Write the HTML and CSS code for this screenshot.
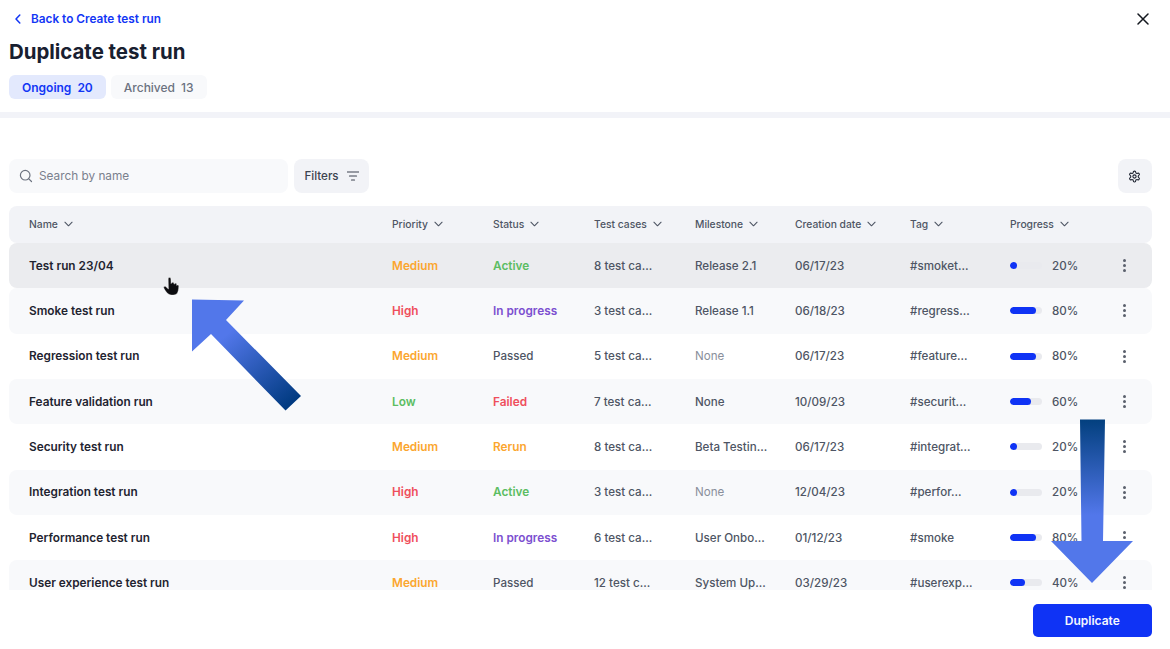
FILE: index.html
```html
<!DOCTYPE html>
<html lang="en">
<head>
<meta charset="utf-8">
<title>Duplicate test run</title>
<link rel="stylesheet" href="styles.css">
</head>
<body>
<div class="page">
  <header class="top">
    <div class="backbar">
      <a class="back"><svg class="ic-back" viewBox="0 0 10 12" width="10" height="12"><path d="M6.800 2 3 6l3.800 4" fill="none" stroke="#1236f5" stroke-width="1.500" stroke-linecap="round" stroke-linejoin="round"/></svg>Back to Create test run</a>
      <svg class="ic-close" viewBox="0 0 12 12" width="12" height="12"><path d="M1 1l10 10M11 1 1 11" stroke="#14181f" stroke-width="1.500" stroke-linecap="round"/></svg>
    </div>
    <h1>Duplicate test run</h1>
    <div class="tabs">
      <div class="tab tab-on"><span>Ongoing</span><span>20</span></div>
      <div class="tab"><span>Archived</span><span>13</span></div>
    </div>
  </header>
  <div class="divider"></div>
  <section class="toolbar">
    <div class="search">
      <svg viewBox="0 0 14 14" width="14" height="14"><circle cx="6.200" cy="6.200" r="4.800" fill="none" stroke="#6d7380" stroke-width="1.200"/><path d="m9.800 9.800 2.700 2.700" stroke="#6d7380" stroke-width="1.200" stroke-linecap="round"/></svg>
      <span>Search by name</span>
    </div>
    <div class="filters">Filters
      <svg viewBox="0 0 12 10" width="12" height="10"><path d="M.5 1h11M2.500 5h7M4.500 9h3" stroke="#3d4350" stroke-width="1.200" stroke-linecap="round"/></svg>
    </div>
    <div class="gear">
      <svg viewBox="0 0 24 24" width="13" height="13" fill="none" stroke="#1d2230" stroke-width="2" stroke-linecap="round" stroke-linejoin="round"><path d="M12.220 2h-.44a2 2 0 0 0-2 2v.18a2 2 0 0 1-1 1.730l-.43.25a2 2 0 0 1-2 0l-.15-.08a2 2 0 0 0-2.730.73l-.22.38a2 2 0 0 0 .73 2.730l.15.1a2 2 0 0 1 1 1.720v.51a2 2 0 0 1-1 1.740l-.15.09a2 2 0 0 0-.73 2.730l.22.38a2 2 0 0 0 2.730.73l.15-.08a2 2 0 0 1 2 0l.43.25a2 2 0 0 1 1 1.730V20a2 2 0 0 0 2 2h.44a2 2 0 0 0 2-2v-.18a2 2 0 0 1 1-1.730l.43-.25a2 2 0 0 1 2 0l.15.08a2 2 0 0 0 2.730-.73l.22-.39a2 2 0 0 0-.73-2.730l-.15-.08a2 2 0 0 1-1-1.740v-.5a2 2 0 0 1 1-1.740l.15-.09a2 2 0 0 0 .73-2.730l-.22-.38a2 2 0 0 0-2.730-.73l-.15.08a2 2 0 0 1-2 0l-.43-.25a2 2 0 0 1-1-1.730V4a2 2 0 0 0-2-2z"/><circle cx="12" cy="12" r="3"/></svg>
    </div>
  </section>
  <section class="table">
    <div class="row head">
      <div class="th">Name<svg viewBox="0 0 10 6"><path d="m1 1 4 4 4-4"/></svg></div>
      <div class="th">Priority<svg viewBox="0 0 10 6"><path d="m1 1 4 4 4-4"/></svg></div>
      <div class="th">Status<svg viewBox="0 0 10 6"><path d="m1 1 4 4 4-4"/></svg></div>
      <div class="th">Test cases<svg viewBox="0 0 10 6"><path d="m1 1 4 4 4-4"/></svg></div>
      <div class="th">Milestone<svg viewBox="0 0 10 6"><path d="m1 1 4 4 4-4"/></svg></div>
      <div class="th">Creation date<svg viewBox="0 0 10 6"><path d="m1 1 4 4 4-4"/></svg></div>
      <div class="th">Tag<svg viewBox="0 0 10 6"><path d="m1 1 4 4 4-4"/></svg></div>
      <div class="th">Progress<svg viewBox="0 0 10 6"><path d="m1 1 4 4 4-4"/></svg></div>
    </div>
    <div class="rows">
      <div class="row hover">
        <div class="name">Test run 23/04</div><div class="med">Medium</div><div class="green">Active</div><div>8 test ca...</div><div>Release 2.1</div><div>06/17/23</div><div>#smoket...</div>
        <div class="prog"><span class="track"><i style="width:7px"></i></span><span>20%</span></div><div class="kebab"><b></b><b></b><b></b></div>
      </div>
      <div class="row alt">
        <div class="name">Smoke test run</div><div class="red">High</div><div class="purple">In progress</div><div>3 test ca...</div><div>Release 1.1</div><div>06/18/23</div><div>#regress...</div>
        <div class="prog"><span class="track"><i style="width:26px"></i></span><span>80%</span></div><div class="kebab"><b></b><b></b><b></b></div>
      </div>
      <div class="row">
        <div class="name">Regression test run</div><div class="med">Medium</div><div>Passed</div><div>5 test ca...</div><div class="none">None</div><div>06/17/23</div><div>#feature...</div>
        <div class="prog"><span class="track"><i style="width:26px"></i></span><span>80%</span></div><div class="kebab"><b></b><b></b><b></b></div>
      </div>
      <div class="row alt">
        <div class="name">Feature validation run</div><div class="green">Low</div><div class="red">Failed</div><div>7 test ca...</div><div>None</div><div>10/09/23</div><div>#securit...</div>
        <div class="prog"><span class="track"><i style="width:21px"></i></span><span>60%</span></div><div class="kebab"><b></b><b></b><b></b></div>
      </div>
      <div class="row">
        <div class="name">Security test run</div><div class="med">Medium</div><div class="med">Rerun</div><div>8 test ca...</div><div>Beta Testin...</div><div>06/17/23</div><div>#integrat...</div>
        <div class="prog"><span class="track"><i style="width:7px"></i></span><span>20%</span></div><div class="kebab"><b></b><b></b><b></b></div>
      </div>
      <div class="row alt">
        <div class="name">Integration test run</div><div class="red">High</div><div class="green">Active</div><div>3 test ca...</div><div class="none">None</div><div>12/04/23</div><div>#perfor...</div>
        <div class="prog"><span class="track"><i style="width:7px"></i></span><span>20%</span></div><div class="kebab"><b></b><b></b><b></b></div>
      </div>
      <div class="row">
        <div class="name">Performance test run</div><div class="red">High</div><div class="purple">In progress</div><div>6 test ca...</div><div>User Onbo...</div><div>01/12/23</div><div>#smoke</div>
        <div class="prog"><span class="track"><i style="width:26px"></i></span><span>80%</span></div><div class="kebab"><b></b><b></b><b></b></div>
      </div>
      <div class="row alt">
        <div class="name">User experience test run</div><div class="med">Medium</div><div>Passed</div><div>12 test c...</div><div>System Up...</div><div>03/29/23</div><div>#userexp...</div>
        <div class="prog"><span class="track"><i style="width:15px"></i></span><span>40%</span></div><div class="kebab"><b></b><b></b><b></b></div>
      </div>
    </div>
  </section>
  <footer class="foot"><button class="primary">Duplicate</button></footer>

  <svg class="overlay" viewBox="0 0 1170 649" width="1170" height="649">
    <defs>
      <linearGradient id="g1" gradientUnits="userSpaceOnUse" x1="232" y1="330" x2="293" y2="403"><stop offset="0" stop-color="#5277ea"/><stop offset="1" stop-color="#003a80"/></linearGradient>
      <linearGradient id="g2" gradientUnits="userSpaceOnUse" x1="1092" y1="420" x2="1092" y2="515"><stop offset="0" stop-color="#03407f"/><stop offset="1" stop-color="#5277ea"/></linearGradient>
    </defs>
    <path d="M192 299.500 244 300.500 226 320 301 396 285.500 410.500 211 334 192 351.500Z" fill="url(#g1)"/>
    <path d="M1080 419.500H1105L1103 541H1133L1092 583 1051 541H1081.500Z" fill="url(#g2)"/>
    <path d="M168.200 278.800c0-1.800 2.600-1.800 2.700 0l.2 4.800.5-.6c.5-1.200 2.200-1 2.300.3l.1.9.5-.4c.7-.9 2.200-.5 2.200.7l0 1c.6-.8 2.200-.4 2.100.9-.2 3-.6 5.600-1.700 7-2 2.200-6.800 2.300-9.300.2-1.700-1.500-3.300-4-4-5.500-.6-1.400 1-2.500 2.100-1.400l2.500 2.300z" fill="#0d0d10" stroke="#fff" stroke-width=".4"/>
  </svg>
</div>
</body>
</html>
```
FILE: styles.css
```css
* { box-sizing: border-box; }
html, body { margin: 0; padding: 0; }
body { background: #fff; font-family: Inter, "Liberation Sans", sans-serif; color: #4e5564; overflow: hidden; }
.page { position: relative; width: 1170px; height: 649px; display: flex; flex-direction: column; overflow: hidden; }

.top { padding: 11px 21px 0 9px; height: 112px; flex: none; }
.backbar { display: flex; justify-content: space-between; align-items: center; height: 16px; }
.back { display: flex; align-items: center; gap: 8px; padding-left: 4px; color: #1236f5; font-size: 11.800px; font-weight: 600; }
h1 { margin: 12px 0 0; font-size: 20.400px; line-height: 26px; font-weight: 700; color: #182030; }
.tabs { display: flex; gap: 5px; margin-top: 10px; }
.tab { display: flex; gap: 6px; align-items: center; height: 24px; padding: 0 13px; border-radius: 6px; background: #f8f9fb; color: #6b7280; font-size: 12px; font-weight: 500; }
.tab-on { background: #e3e9fd; color: #1236f5; font-weight: 600; }
.divider { height: 6px; background: #f2f3f8; flex: none; }

.toolbar { display: flex; gap: 6px; padding: 41px 18.500px 0 9px; height: 88px; flex: none; }
.search { width: 279px; height: 34px; display: flex; align-items: center; gap: 6px; padding-left: 10px; border-radius: 8px; background: #f8f9fb; color: #7a808d; font-size: 11.800px; }
.filters { width: 75px; height: 34px; display: flex; align-items: center; justify-content: center; gap: 8px; border-radius: 8px; background: #f2f3f7; color: #3d4350; font-size: 11.600px; font-weight: 500; }
.gear { margin-left: auto; width: 33.500px; height: 34px; display: flex; align-items: center; justify-content: center; border-radius: 8px; background: #f2f3f7; }

.table { flex: 1; margin: 0 18.500px 0 9px; min-height: 0; overflow: hidden; display: flex; flex-direction: column; }
.row { display: grid; grid-template-columns: 363px 101px 101px 101px 100px 115px 100px 104px 1fr; align-items: center; padding: 0 0 0 20px; height: 45.330px; flex: none; border-radius: 8px; font-size: 11.600px; font-weight: 500; color: #4e5564; white-space: nowrap; }
.head { height: 37px; padding-bottom: 1px; background: #f2f3f7; font-size: 10.300px; }
.rows { flex: 1; min-height: 0; overflow: hidden; }
.th { display: flex; align-items: center; gap: 6px; color: #4e5564; font-weight: 500; }
.th svg { width: 9px; height: 6px; fill: none; stroke: #4e5564; stroke-width: 1.200; stroke-linecap: round; stroke-linejoin: round; }
.hover { background: #ebecef; }
.alt { background: #f8f9fb; }
.name { color: #1f2430; font-weight: 600; font-size: 11.800px; }
.med { color: #fba62f; font-weight: 600; font-size: 11.800px; }
.red { color: #ef4e5c; font-weight: 600; font-size: 11.800px; }
.green { color: #5bbd62; font-weight: 600; font-size: 11.800px; }
.purple { color: #7c4fd0; font-weight: 600; font-size: 11.800px; }
.none { color: #8a8f9b; font-weight: 400; }
.prog { display: flex; align-items: center; gap: 10px; }
.track { display: block; width: 32px; height: 7px; border-radius: 4px; background: #e9eaee; overflow: hidden; }
.track i { display: block; height: 7px; border-radius: 4px; background: #0f33f5; }
.kebab { display: flex; flex-direction: column; gap: 2px; width: 3px; margin-left: 9px; }
.kebab b { display: block; width: 3px; height: 3px; border-radius: 50%; background: #5a606c; }

.foot { flex: none; height: 59px; display: flex; justify-content: flex-end; padding: 14px 18.500px 0 0; }
.primary { width: 118.500px; height: 33px; border: 0; border-radius: 5px; background: #0f33f5; color: #f4f6ff; font: 600 12px Inter, "Liberation Sans", sans-serif; }

.overlay { position: absolute; left: 0; top: 0; pointer-events: none; }
```
